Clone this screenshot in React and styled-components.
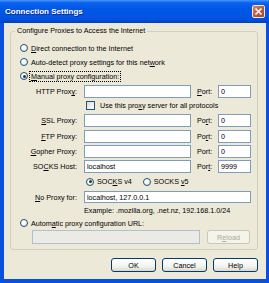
import React from 'react';
import styled, { createGlobalStyle } from 'styled-components';

const GlobalStyle = createGlobalStyle`
  html, body {
    margin: 0;
    padding: 0;
    background: #fff;
  }
  body {
    font-family: "Liberation Sans", Arial, sans-serif;
  }
`;

const Window = styled.div`
  width: 269px;
  height: 283px;
  box-sizing: border-box;
  display: flex;
  flex-direction: column;
  background: #0A50DE;
  font-size: 7.2px;
  color: #000;
`;

const TitleBar = styled.div`
  height: 23px;
  flex: none;
  display: flex;
  align-items: center;
  justify-content: space-between;
  padding: 0 4px 0 5px;
  background: linear-gradient(to bottom, #4A95FF 0%, #0A62EE 12%, #0057E6 40%, #0055E3 75%, #0049D2 92%, #003FBE 100%);
  color: #fff;
  font-weight: bold;
  font-size: 8px;
  text-shadow: 1px 1px 0 #0A2A8A;
`;

const CloseButton = styled.div`
  width: 13px;
  height: 13px;
  box-sizing: border-box;
  border: 1px solid #f3e6e0;
  border-radius: 2px;
  background: linear-gradient(135deg, #D88A6A 0%, #BC5A3A 50%, #A44A2E 100%);
  display: flex;
  align-items: center;
  justify-content: center;
`;

const Body = styled.div`
  flex: 1;
  margin: 0 3px 4px 4px;
  background: #ECE9D8;
  display: flex;
  flex-direction: column;
  padding: 0 8px 0 6px;
`;

const Group = styled.fieldset`
  margin: 3px 0 0 0;
  padding: 6px 5px 5px 9px;
  border: 1px solid #D0D0BF;
  border-radius: 3px;
  display: flex;
  flex-direction: column;
  min-width: 0;
`;

const Legend = styled.legend`
  line-height: 10px;
  padding: 0 2px;
  margin-left: -5px;
`;

const Row = styled.div`
  display: flex;
  align-items: center;
  height: ${({ $h }) => $h || 12}px;
  margin-top: ${({ $mt }) => $mt || 0}px;
  margin-left: ${({ $ml }) => $ml || 0}px;
  color: ${({ $disabled }) => ($disabled ? '#ACA899' : '#000')};
`;

const Radio = styled.span`
  width: 8px;
  height: 8px;
  box-sizing: border-box;
  border: 1px solid #1C5180;
  border-radius: 50%;
  background: radial-gradient(circle at 35% 35%, #fff 30%, #DCD9C8 100%);
  margin-right: 3px;
  flex: none;
  display: flex;
  align-items: center;
  justify-content: center;
  &::after {
    content: '';
    width: 3px;
    height: 3px;
    border-radius: 50%;
    background: ${({ $checked }) => ($checked ? '#2A3A2A' : 'transparent')};
  }
`;

const Check = styled.span`
  width: 9px;
  height: 9px;
  box-sizing: border-box;
  border: 1px solid #1C5180;
  background: linear-gradient(135deg, #DCDBD5 0%, #fff 100%);
  margin-right: 5px;
  flex: none;
`;

const Focused = styled.span`
  outline: 1px dotted #000;
  outline-offset: 0;
  padding: 0 1px;
  margin-left: -1px;
`;

const FieldLabel = styled.span`
  width: 57px;
  margin-right: 7px;
  text-align: right;
  flex: none;
  white-space: nowrap;
`;

const PortLabel = styled.span`
  width: 21px;
  margin-left: 6px;
  flex: none;
`;

const TextBox = styled.input`
  width: ${({ $w }) => $w}px;
  height: ${({ $h }) => $h || 13}px;
  box-sizing: border-box;
  margin: 0 0 0 ${({ $ml }) => $ml || 0}px;
  padding: 0 2px;
  border: 1px solid ${({ disabled }) => (disabled ? '#AFC0D2' : '#7F9DB9')};
  background: ${({ disabled }) => (disabled ? '#EBEAE4' : '#fff')};
  font: inherit;
  color: #000;
  outline: none;
  flex: none;
`;

const Button = styled.div`
  width: ${({ $w }) => $w || 45}px;
  height: ${({ $h }) => $h || 14}px;
  box-sizing: border-box;
  margin-left: ${({ $ml }) => $ml || 0}px;
  border: 1px solid ${({ $disabled }) => ($disabled ? '#C9C7BA' : '#003C74')};
  border-radius: 3px;
  background: ${({ $disabled }) =>
    $disabled ? '#F5F4EA' : 'linear-gradient(to bottom, #FFFFFF 0%, #F4F3EE 60%, #DCD8CC 100%)'};
  color: ${({ $disabled }) => ($disabled ? '#ACA899' : '#000')};
  display: flex;
  align-items: center;
  justify-content: center;
  flex: none;
`;

const ButtonBar = styled.div`
  display: flex;
  justify-content: flex-end;
  gap: 6px;
  margin-top: 8px;
`;

const FieldRow = ({ label, value = '', port, portLabel, mt }) => (
  <Row $h={13} $mt={mt}>
    <FieldLabel>{label}</FieldLabel>
    <TextBox $w={107} value={value} readOnly />
    <PortLabel>{portLabel}</PortLabel>
    <TextBox $w={33} value={port} readOnly />
  </Row>
);

const App = () => (
  <>
    <GlobalStyle />
    <Window>
      <TitleBar>
        <span>Connection Settings</span>
        <CloseButton>
          <svg width="9" height="9" viewBox="0 0 9 9">
            <path d="M1.5 1.5 L7.5 7.5 M7.5 1.5 L1.5 7.5" stroke="#fff" strokeWidth="1.6" />
          </svg>
        </CloseButton>
      </TitleBar>
      <Body>
        <Group>
          <Legend>Configure Proxies to Access the Internet</Legend>
          <Row>
            <Radio />
            <span><u>D</u>irect connection to the Internet</span>
          </Row>
          <Row $mt={2}>
            <Radio />
            <span>Auto-detect proxy settings for this net<u>w</u>ork</span>
          </Row>
          <Row $mt={2}>
            <Radio $checked />
            <Focused><u>M</u>anual proxy configuration:</Focused>
          </Row>
          <FieldRow
            mt={3}
            label={<>HTTP Prox<u>y</u>:</>}
            portLabel={<><u>P</u>ort:</>}
            port="0"
          />
          <Row $h={11} $mt={2} $ml={66}>
            <Check />
            <span>Use this pro<u>x</u>y server for all protocols</span>
          </Row>
          <FieldRow
            mt={3}
            label={<><u>S</u>SL Proxy:</>}
            portLabel={<>Po<u>r</u>t:</>}
            port="0"
          />
          <FieldRow
            mt={3}
            label={<><u>F</u>TP Proxy:</>}
            portLabel={<>Po<u>r</u>t:</>}
            port="0"
          />
          <FieldRow
            mt={2}
            label={<><u>G</u>opher Proxy:</>}
            portLabel="Port:"
            port="0"
          />
          <FieldRow
            mt={2}
            label={<>SO<u>C</u>KS Host:</>}
            value="localhost"
            portLabel={<>Por<u>t</u>:</>}
            port="9999"
          />
          <Row $h={11} $mt={3} $ml={66}>
            <Radio $checked />
            <span>SOC<u>K</u>S v4</span>
            <Radio style={{ marginLeft: 11 }} />
            <span>SOCKS <u>v</u>5</span>
          </Row>
          <Row $mt={4}>
            <FieldLabel><u>N</u>o Proxy for:</FieldLabel>
            <TextBox $w={167} $h={12} value="localhost, 127.0.0.1" readOnly />
          </Row>
          <Row $h={10} $mt={2} $ml={64}>
            Example: .mozilla.org, .net.nz, 192.168.1.0/24
          </Row>
          <Row $mt={2}>
            <Radio />
            <span>Autom<u>a</u>tic proxy configuration URL:</span>
          </Row>
          <Row $h={14} $mt={1}>
            <TextBox $w={168} $h={14} $ml={12} disabled value="" readOnly />
            <Button $w={43} $ml={7} $disabled>
              <span>R<u>e</u>load</span>
            </Button>
          </Row>
        </Group>
        <ButtonBar>
          <Button>OK</Button>
          <Button>Cancel</Button>
          <Button>Help</Button>
        </ButtonBar>
      </Body>
    </Window>
  </>
);

export default App;
